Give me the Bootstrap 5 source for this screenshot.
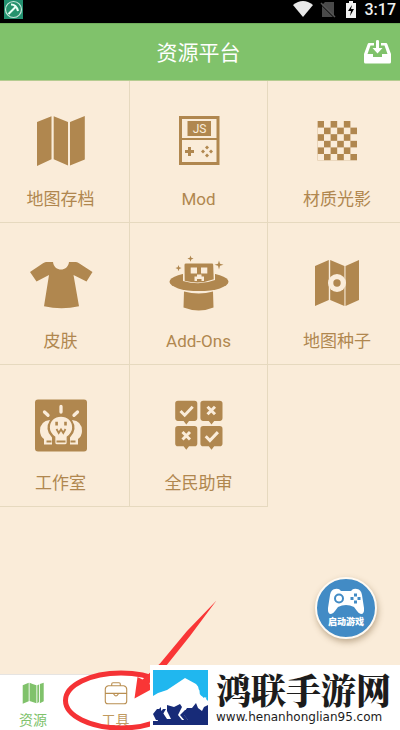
<!DOCTYPE html>
<html lang="zh-CN">
<head>
<meta charset="utf-8">
<meta name="viewport" content="width=device-width, initial-scale=1">
<title>资源平台</title>
<link href="https://cdn.jsdelivr.net/npm/bootstrap@5.3.0/dist/css/bootstrap.min.css" rel="stylesheet">
<style>
  :root { --brown: #b0874f; --cream: #faecd9; --line: #e6d9bf; --leaf: #80c26b; }
  body { font-family: Roboto, "Noto Sans CJK SC", sans-serif; background: var(--cream); color: var(--brown); }
  .screen { min-height: 100vh; overflow: hidden; }
  .status { height: 23px; background: #000; }
  .clock { font-size: 16px; line-height: 20px; font-weight: 500; color: #eee; }
  .topbar { height: 58px; background: var(--leaf); border-top: 1px solid #71ad5d; border-bottom: 1px solid #b5cc91; }
  .topbar h1 { font-size: 21px; line-height: 28px; font-weight: 400; padding-top: 2px; padding-right: 3px; }
  .inbox { width: 28px; height: 28px; right: 9px; top: 14px; }
  .tiles { display: grid; grid-template-columns: 130fr 138fr 132fr; }
  .tile { height: 142px; color: var(--brown); text-decoration: none; font-size: 17px; line-height: 24px; padding-top: 24px; border-right: 1px solid var(--line); border-bottom: 1px solid var(--line); }
  .tile:nth-child(3n+1) { padding-right: 8px; }
  .tile:nth-child(3n) { padding-left: 6px; border-right: 0; }
  .tile svg { width: 72px; height: 72px; margin-bottom: 10px; fill: currentColor; }
  .tile svg .cut { fill: var(--cream); }
  .tile svg .ink { fill: none; stroke: var(--brown); }
  .tile svg .light { fill: none; stroke: var(--cream); }
  .launch { width: 62px; height: 62px; right: 23px; bottom: 91px; background: #428bc5; border: 2px solid #fffaf2; box-shadow: 1px 3px 6px rgba(120,90,50,.45); color: #fff; font-size: 9px; line-height: 12px; font-weight: 900; }
  .tabs { height: 56px; background: #fff; border-top: 1px solid #e6e4e2; padding-right: 1px; }
  .tab { width: 83px; font-size: 14px; line-height: 20px; color: #c09a60; background: none; border: 0; padding: 6px 0 0; }
  .tab:first-child { width: 74px; padding-right: 8px; color: var(--leaf); }
  .tab svg { width: 28px; height: 28px; margin-bottom: 5px; }
  .pointer-mark { left: 60px; bottom: 0; width: 160px; height: 132px; pointer-events: none; }
  .promo { left: 150px; right: 0; bottom: 0; height: 65px; background: #fff; color: #1c1c1c; padding: 5px 3px; text-decoration: none; }
  .promo svg { width: 55px; height: 55px; }
  .promo-name { font-family: "Noto Serif CJK SC", "Noto Sans CJK SC", serif; font-size: 35px; line-height: 38px; font-weight: 900; }
  .promo-url { font-family: "DejaVu Sans", sans-serif; font-size: 12px; line-height: 16px; padding-top: 1px; }
</style>
<script src="https://cdn.jsdelivr.net/npm/bootstrap@5.3.0/dist/js/bootstrap.bundle.min.js"></script>
</head>
<body>
<div class="screen position-relative d-flex flex-column">
  <div class="status d-flex align-items-start justify-content-between">
    <svg class="ms-1" width="19" height="19" viewBox="0 0 19 19" aria-hidden="true"><rect width="19" height="19" fill="#22906f"/><circle cx="9.500" cy="9.500" r="8" fill="#25936d" stroke="#c5e5d8" stroke-width="1.200"/><path d="M4.500 14 12 6.500M7 4.500c3 0 6 2.500 7 6.500" fill="none" stroke="#e9fff5" stroke-width="2"/></svg>
    <div class="d-flex pe-1">
      <svg width="72" height="20" viewBox="293 0 72 20" aria-hidden="true"><path d="M293 5q10-8 20 0l-10 12z" fill="#e8e8e8"/><path d="M325 2h9v14l-12-11zM322 6v11h11z" fill="#4a4a4a"/><path d="m321 3 14 14" stroke="#555" stroke-width="1.500"/><path d="M346 3h3V1h4v2h3v15h-10z" fill="#f2f2f2"/><path d="m352 5-4 6h3l-1 5 4-7h-3z" fill="#000"/></svg>
      <span class="clock">3:17</span>
    </div>
  </div>
  <header class="topbar position-relative d-flex align-items-center justify-content-center text-white">
    <h1 class="m-0">资源平台</h1>
    <button class="inbox btn p-0 border-0 position-absolute d-flex" aria-label="下载">
      <svg width="28" height="28" viewBox="363 38 28 28" fill="#fff"><path d="M369 43h5v2.500h-3.500L367.500 54H373v3h9v-3h5.500l-3-8.500H381V43h5q1 0 1.300 1l3.700 10v8q0 1.500-1.500 1.500h-24Q364 63.500 364 62v-8l3.700-10q.3-1 1.300-1z"/><path d="M376 41q0-1 1.500-1t1.500 1v7h3.500l-5 5.500-5-5.500h3.500z"/></svg>
    </button>
  </header>

  <main class="tiles text-center">
    <a href="#" class="tile d-flex flex-column align-items-center">
      <svg viewBox="25 105 72 72" aria-hidden="true"><path d="m37 122 14.500-5.700v43L37 166zM53.700 116.300 68 122v43.500l-14.300-6.200zM70 122l14.800-6v43.500l-14.800 6z"/></svg>
      地图存档</a>
    <a href="#" class="tile d-flex flex-column align-items-center">
      <svg viewBox="163 105 72 72" aria-hidden="true"><path class="ink" stroke-width="3" d="M180.500 117.500h37.500v46h-37.500z"/><path class="ink" stroke-width="2.200" d="M180 139h38"/><path d="M187.500 121h23.500v15h-23.500z"/><text class="cut" x="199.500" y="133" text-anchor="middle" font-size="12">JS</text><path d="M188 147h3v3h3v3h-3v3h-3v-3h-3v-3h3zM207 145.500l2 2-2 2-2-2zm0 8 2 2-2 2-2-2zm-4-4 2 2-2 2-2-2zm8 0 2 2-2 2-2-2z"/></svg>
      Mod</a>
    <a href="#" class="tile d-flex flex-column align-items-center">
      <svg viewBox="301 105 72 72" aria-hidden="true"><defs><pattern id="check" x="317.400" y="121" width="13.200" height="13.200" patternUnits="userSpaceOnUse"><path fill="#b0874f" d="M0 0h6.600v6.600H0zM6.600 6.600h6.600v6.600H6.600z"/></pattern></defs><path fill="url(#check)" d="M317.400 121H357v39.600h-39.600z"/></svg>
      材质光影</a>

    <a href="#" class="tile d-flex flex-column align-items-center">
      <svg viewBox="25 247 72 72" aria-hidden="true"><path d="M46 262h7c1 10 15 10 16 0h7q2 .3 3 1.200L92.500 272 86.500 281.500 73.500 275 79 306.300Q61.500 310 44 306.300L49 275l-12.500 6.500L30 272l13-8.800q1.500-1 3-1.200z"/></svg>
      皮肤</a>
    <a href="#" class="tile d-flex flex-column align-items-center">
      <svg viewBox="163 247 72 72" aria-hidden="true"><path d="M184 291.500q15 4 29 0l.5 16q-14.500 6-30 0z"/><ellipse cx="199" cy="281.800" rx="29.500" ry="9.300"/><path class="cut" d="M183 271h32v9q-15 6-32 1z"/><path d="M186 263.500h26q1.200 0 1.200 1.300l.5 14.500q-14 5.500-29 1.500l-.2-16q0-1.300 1.500-1.300z"/><path class="cut" d="M190.700 267.500h6.300v6h-6.300zM201 267.500h6.300v6H201zM197 274.500h4.500v2h2.500v4.500h-2.500v-2H197v2h-2.500v-4.500h2.500z"/><path d="M190.500 255.500l.8 2.300 2.300.8-2.300.8-.8 2.300-.8-2.300-2.300-.8 2.300-.8zM178.500 265l.8 2.300 2.300.8-2.300.8-.8 2.300-.8-2.300-2.300-.8 2.300-.8zM219 260.500l1 3.300 3.500 1-3.500 1-1 3.700-1-3.700-3.500-1 3.500-1z"/></svg>
      Add-Ons</a>
    <a href="#" class="tile d-flex flex-column align-items-center">
      <svg viewBox="301 247 72 72" aria-hidden="true"><path d="m315 266 13.800-6v40L315 306zM330.200 260l14.200 6v40l-14.200-6zM345.500 266l13.500-6v40l-13.500 6z"/><circle class="cut" cx="337" cy="283" r="9"/><circle cx="337" cy="283" r="3.700"/></svg>
      地图种子</a>

    <a href="#" class="tile d-flex flex-column align-items-center">
      <svg viewBox="25 389 72 72" aria-hidden="true"><rect x="35" y="399.500" width="52" height="52" rx="3"/><path class="light" stroke-width="3.300" stroke-linecap="round" d="M61 406.500v5.500M44.500 412l3.500 3.300M77.500 412l-3.500 3.300"/><path class="cut" d="M50 420q-10 1-10 11 0 5 4 8v5.500h8v-7q-8-8-2-17.500zM72 420q10 1 10 11 0 5-4 8v5.500h-8v-7q8-8 2-17.500z"/><path class="cut" stroke="#b0874f" stroke-width="1.300" d="M61 416c-7 0-11.800 5-11.800 11.500 0 4 2 7 5.500 9.500v5.500q0 2.500 2.300 2.500h8q2.300 0 2.300-2.500V437c3.500-2.500 5.500-5.500 5.500-9.500 0-6.500-4.800-11.500-11.800-11.500z"/><path class="ink" stroke-width="1.800" d="M56.500 429l2.200 4 2.300-3.500 2.300 3.500 2.200-4M56.500 441.500h9M46.500 441.500h5M70.500 441.500h5"/><path d="M55.300 421.700h2.600v3.700h-2.600zM64.200 421.700h2.600v3.700h-2.600z"/></svg>
      工作室</a>
    <a href="#" class="tile d-flex flex-column align-items-center">
      <svg viewBox="163 389 72 72" aria-hidden="true"><g id="bubbles"><path d="M178 400.800h16.500q2.800 0 2.800 2.800v14.500q0 2.800-2.800 2.800h-5.500l-2.700 3.500-2.700-3.500H178q-2.800 0-2.800-2.800v-14.500q0-2.800 2.800-2.800zM203.200 400.800h16.500q2.800 0 2.800 2.800v14.500q0 2.800-2.800 2.800h-5.500l-2.700 3.500-2.700-3.500h-5.600q-2.800 0-2.800-2.800v-14.500q0-2.800 2.800-2.800z"/></g><use href="#bubbles" y="25.300"/><path class="light" stroke-width="3" d="m180.500 411 4.200 4.200 8-8.400M207.500 406.700l7.500 7.500m0-7.500-7.500 7.500M182.500 432l7.500 7.500m0-7.500-7.500 7.500M205.700 436.300l4.200 4.200 8-8.400"/></svg>
      全民助审</a>
  </main>

  <button class="launch position-absolute rounded-circle p-0 d-flex flex-column align-items-center justify-content-center">
    <svg width="38" height="28" viewBox="0 0 38 28" aria-hidden="true"><path fill="#fff" d="M8 1q4-1 6 2h10q2-3 6-2 4 .5 5 6l2 13q.5 6-3 6-2 0-4-3l-3-4q-8-4-16 0l-3 4q-2 3-4 3-3.500 0-3-6L3 7q1-5.500 5-6z"/><circle cx="12" cy="10.500" r="4" fill="none" stroke="#428bc5" stroke-width="2"/><path fill="#428bc5" d="M27 5.500h3v3h-3zM27 12.500h3v3h-3zM23.500 9h3v3h-3zM30.500 9h3v3h-3z"/></svg>
    启动游戏
  </button>

  <nav class="tabs d-flex mt-auto">
    <button class="tab d-flex flex-column align-items-center">
      <svg viewBox="19 680 28 28" fill="#80c26b" aria-hidden="true"><path d="m21 685 7-3v21.500l-7 3zM29 682l3.500 1.500L37 685v21l-8-2.700zM38 685l2-1v20.500l-2 1.500zM41 683.500l4.500-1.500v21.500L41 706z"/></svg>
      资源</button>
    <button class="tab d-flex flex-column align-items-center">
      <svg viewBox="102 680 28 28" fill="none" stroke="#b98f52" stroke-width="1.300" aria-hidden="true"><path d="M107 685.500h18q3.500 1 3.500 4v14q0 3-3 3h-19q-3 0-3-3v-14q0-3 3.500-4zM103.500 694.500h25M111 685v-1.500q0-1.500 1.500-1.500h7q1.500 0 1.500 1.500v1.500M113.500 694.500v1q2.500 4 5 0v-1"/></svg>
      工具</button>
  </nav>

  <svg class="pointer-mark position-absolute" viewBox="60 598 160 132" aria-hidden="true"><ellipse cx="121" cy="700.500" rx="55.500" ry="27.500" fill="none" stroke="#f53235" stroke-width="5"/><path d="M216.500 600.500 190 636 166 666 149.500 683l1.500 6.500-16.500 9 3-21.500 5 2.500 17.500-16L187 631z" fill="#f93636"/></svg>

  <a href="#" class="promo position-absolute d-flex">
    <svg class="flex-shrink-0" viewBox="0 0 55 55" aria-hidden="true"><path fill="#20b7ef" d="M0 0h55v55H0z"/><path fill="#172b78" d="M0 33h55v22H0z"/><path fill="#fff" d="M0 26Q6 22 14 20L32 8l11 6 4 5q-2 5 3 8l5 1v7l-4 2-2 4-4-3-2-5-4 5-5 0-4 6 5 6h-6l-4-5 4-8-2-3-6 3-7-2v6l4 8h-4l-6-9v-3l-6 6 3 8H0z"/><path fill="#20b7ef" d="M48 12q-4 4-2 8l4 3v5q5-3 4-7-4-2-3-5zM55 24v7l-2-2z"/><path fill="#172b78" d="m7 39-3 5 3 6H3l-3-6 4-5zM13 39l-3 5 3 6H9l-3-6 4-5zM36 40l-5 5 5 6h-4l-5-6 5-5zM45 45v-6l4 5z"/></svg>
    <span class="d-flex flex-column align-items-start ps-2 text-nowrap"><span class="promo-name">鸿联手游网</span><span class="promo-url">www.henanhonglian95.com</span></span>
  </a>
</div>
</body>
</html>
